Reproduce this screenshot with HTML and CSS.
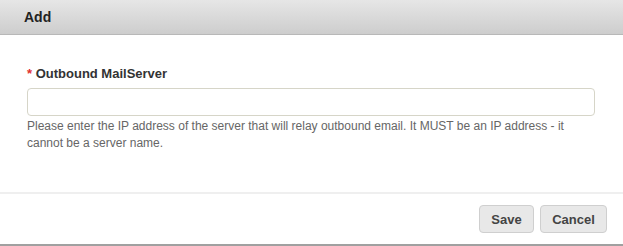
FILE: index.html
```html
<!DOCTYPE html>
<html lang="en">
<head>
  <meta charset="UTF-8">
  <title>Add</title>
  <link rel="stylesheet" href="styles.css">
</head>
<body>
<div class="dialog">
  <div class="dialog-header">Add</div>
  <div class="dialog-body">
    <label for="mailserver" class="field-label"><span class="required">*</span> Outbound MailServer</label>
    <input id="mailserver" class="field-input" type="text">
    <div class="field-help">Please enter the IP address of the server that will relay outbound email. It MUST be an IP address - it cannot be a server name.</div>
  </div>
  <div class="dialog-footer">
    <button type="button" class="btn btn-save">Save</button>
    <button type="button" class="btn btn-cancel">Cancel</button>
  </div>
</div>
</body>
</html>
```

FILE: styles.css
```css
* {
  box-sizing: border-box;
}
body {
  margin: 0;
  font-family: "Liberation Sans", Arial, sans-serif;
  background-color: #fff;
}
.dialog {
  width: 623px;
  height: 246px;
  display: flex;
  flex-direction: column;
  border-bottom: 2px solid #a0a0a0;
}
.dialog-header {
  height: 35px;
  padding: 9px 0 0 24px;
  font-size: 14px;
  font-weight: bold;
  color: #222;
  background: linear-gradient(#e6e6e6, #cdcdcd);
  border-bottom: 1px solid #b8b8b8;
}
.dialog-body {
  height: 159px;
  padding: 31px 28px 0 27px;
  border-bottom: 2px solid #efefef;
}
.field-label {
  display: block;
  font-size: 13px;
  font-weight: bold;
  color: #333;
  margin-bottom: 7px;
}
.required {
  color: #e03030;
}
.field-input {
  display: block;
  width: 100%;
  height: 28px;
  margin: 0;
  border: 1px solid #d6d5c8;
  border-radius: 4px;
  background: #fff;
}
.field-help {
  margin-top: 2px;
  font-size: 12px;
  line-height: 17px;
  color: #666;
}
.dialog-footer {
  flex: 1;
  display: flex;
  justify-content: flex-end;
  align-items: flex-start;
  gap: 6px;
  padding: 11px 16px 0 0;
}
.btn {
  height: 28px;
  padding: 0;
  font-family: "Liberation Sans", Arial, sans-serif;
  font-size: 13px;
  font-weight: bold;
  color: #444;
  background-color: #e8e8e8;
  border: 1px solid #cfcfcf;
  border-radius: 4px;
}
.btn-save {
  width: 55px;
}
.btn-cancel {
  width: 67px;
}
```
